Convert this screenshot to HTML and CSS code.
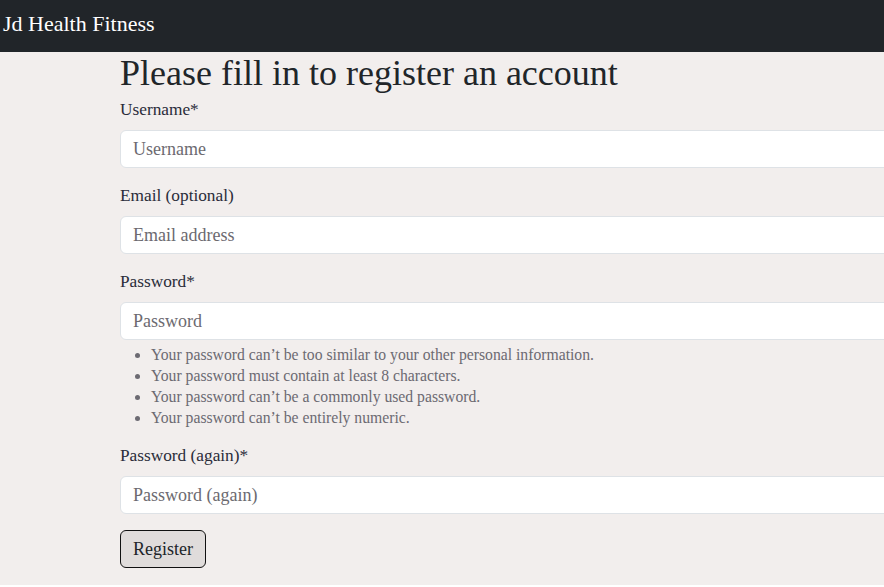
FILE: index.html
```html
<!DOCTYPE html>
<html lang="en">
<head>
<meta charset="utf-8">
<title>Register</title>
<link rel="stylesheet" href="styles.css">
</head>
<body>
<nav class="navbar"><span class="brand">Jd Health Fitness</span></nav>
<main class="page">
  <div class="content">
    <h1 class="title">Please fill in to register an account</h1>
    <form class="form">
      <div class="field">
        <label class="label" for="u">Username*</label>
        <input class="input" id="u" type="text" placeholder="Username">
      </div>
      <div class="field">
        <label class="label" for="e">Email (optional)</label>
        <input class="input" id="e" type="email" placeholder="Email address">
      </div>
      <div class="field">
        <label class="label" for="p">Password*</label>
        <input class="input" id="p" type="password" placeholder="Password">
        <ul class="help">
          <li>Your password can’t be too similar to your other personal information.</li>
          <li>Your password must contain at least 8 characters.</li>
          <li>Your password can’t be a commonly used password.</li>
          <li>Your password can’t be entirely numeric.</li>
        </ul>
      </div>
      <div class="field">
        <label class="label" for="p2">Password (again)*</label>
        <input class="input" id="p2" type="password" placeholder="Password (again)">
      </div>
      <button class="btn" type="button">Register</button>
    </form>
  </div>
</main>
</body>
</html>
```

FILE: styles.css
```css
* { box-sizing: border-box; }
html, body { margin: 0; padding: 0; background: #fff; overflow: hidden; }
body { font-family: "Liberation Serif", "Times New Roman", serif; color: #212529; }
.navbar { height: 52px; background: #212529; display: flex; align-items: center; padding: 0 3px 4px; }
.brand { color: #fff; font-size: 22px; }
.page { background: #f2eeed; padding: 0 0 1px 120px; overflow: hidden; }
.content { width: 800px; }
.title { font-size: 36px; font-weight: 400; line-height: 42px; margin: 0 0 4px; color: #212529; }
.field { display: flex; flex-direction: column; margin-bottom: 16px; }
.label { font-size: 17.3px; line-height: 24px; margin-bottom: 8px; color: #2a2c3a; }
.input { height: 38px; border: 1px solid #dee2e6; border-radius: 6px; background: #fff; padding: 0 12px; font-family: inherit; font-size: 18px; color: #212529; width: 100%; }
.input::placeholder { color: #6c6a70; }
.help { margin: 4px 0 0; padding-left: 31px; font-size: 15.7px; line-height: 21px; color: #6c6a72; }
.btn { font-family: inherit; font-size: 18px; height: 38px; padding: 0 12px; background: #e0dcdb; border: 1px solid #111; border-radius: 6px; color: #212529; margin-bottom: 16px; }
```
